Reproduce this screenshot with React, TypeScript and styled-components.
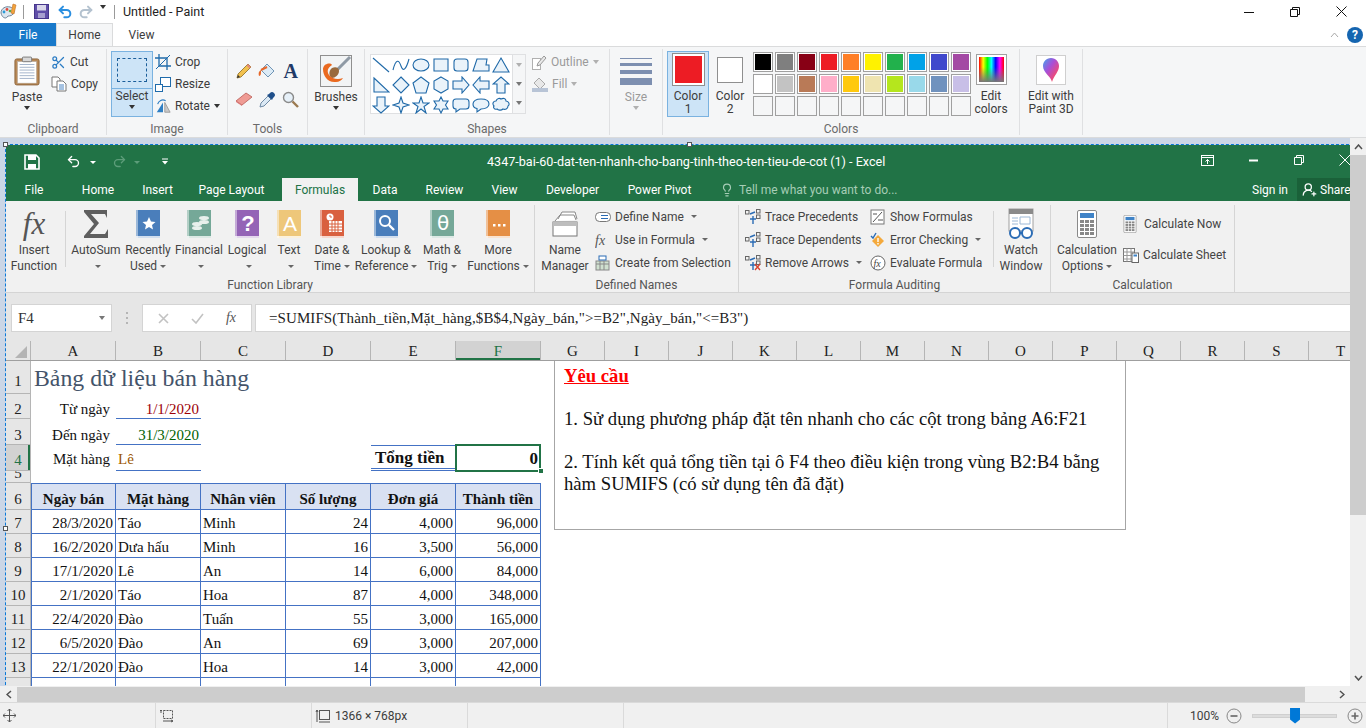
import React from "react";
import styled, { createGlobalStyle } from "styled-components";
import { Scissors, Undo2, Redo2, Lightbulb, UserRoundPlus } from "lucide-react";

const UI_FONT = `Roboto, "Liberation Sans", sans-serif`;
const SHEET_FONT = `"Liberation Serif", serif`;
const BLUE = "#4472c4";

const Global = createGlobalStyle`
  html, body { margin: 0; padding: 0; background: #fff; }
  * { box-sizing: border-box; }
  svg { display: block; flex: none; }
`;

const Window = styled.div`
  width: 1366px;
  height: 728px;
  overflow: hidden;
  display: flex;
  flex-direction: column;
  font-family: ${UI_FONT};
  font-size: 12px;
  color: #3c3c3c;
  background: #fff;
`;

/* ---------- paint chrome ---------- */

const PaintTitle = styled.div`
  height: 23px;
  display: flex;
  align-items: center;
  background: #fff;
`;
const QatSep = styled.div<{ $m: number }>`
  width: 1px;
  height: 14px;
  background: #9a9a9a;
  margin: 0 ${(p) => p.$m}px;
`;
const QatItem = styled.div<{ $ml: number }>`
  margin-left: ${(p) => p.$ml}px;
`;
const TitleText = styled.span`
  font-size: 12.5px;
  color: #222;
`;
const Controls = styled.div`
  margin-left: auto;
  display: flex;
  align-items: center;
  padding-right: 2px;
`;
const CtrlBtn = styled.div`
  width: 46px;
  height: 23px;
  display: flex;
  align-items: center;
  justify-content: center;
`;
const PaintTabs = styled.div`
  height: 23px;
  display: flex;
  align-items: stretch;
  background: #fff;
`;
const PaintFile = styled.div`
  width: 56px;
  background: #1979ca;
  color: #fff;
  display: flex;
  align-items: center;
  justify-content: center;
`;
const PaintTab = styled.div<{ $active?: boolean }>`
  width: 57px;
  display: flex;
  align-items: center;
  justify-content: center;
  color: #3c3c3c;
  background: ${(p) => (p.$active ? "#f5f6f7" : "transparent")};
  border: 1px solid ${(p) => (p.$active ? "#dadbdc" : "transparent")};
  border-bottom: none;
`;
const RibbonHelp = styled.div`
  margin-left: auto;
  display: flex;
  align-items: center;
  gap: 8px;
  padding-right: 3px;
`;
const HelpDot = styled.div`
  width: 16px;
  height: 16px;
  border-radius: 50%;
  background: #1565b0;
  color: #fff;
  font-weight: 700;
  font-size: 12px;
  display: flex;
  align-items: center;
  justify-content: center;
`;
const PaintRibbon = styled.div`
  height: 92px;
  background: #f5f6f7;
  border-top: 1px solid #dadbdc;
  border-bottom: 1px solid #dadbdc;
  display: flex;
`;
const PGroup = styled.div<{ $w: number }>`
  width: ${(p) => p.$w}px;
  margin-top: 2px;
  height: 86px;
  border-right: 1px solid #dfe0e2;
  display: flex;
  flex-direction: column;
`;
const PBody = styled.div<{ $pad?: number }>`
  height: 70px;
  display: flex;
  padding-left: ${(p) => p.$pad ?? 0}px;
`;
const PLabel = styled.div`
  height: 16px;
  text-align: center;
  color: #6a6a6a;
  line-height: 20px;
`;
const PBig = styled.div<{ $w: number; $ml?: number; $sel?: boolean; $dim?: boolean }>`
  width: ${(p) => p.$w}px;
  height: 66px;
  margin-left: ${(p) => p.$ml ?? 0}px;
  margin-top: 2px;
  display: flex;
  flex-direction: column;
  align-items: center;
  line-height: 15px;
  color: ${(p) => (p.$dim ? "#9a9a9a" : "#3c3c3c")};
  background: ${(p) => (p.$sel ? "#cde4f7" : "transparent")};
  border: 1px solid ${(p) => (p.$sel ? "#7ab2e0" : "transparent")};
`;
const PIconBox = styled.div`
  height: 38px;
  display: flex;
  align-items: center;
  justify-content: center;
  flex: none;
  align-self: stretch;
`;
const SelectTop = styled(PIconBox)`
  height: 37px;
  border-bottom: 1px solid #7ab2e0;
`;
const SelectMarquee = styled.div`
  width: 30px;
  height: 24px;
  border: 1px dashed #1b5e9a;
  background: #cde4f7;
`;
const PCaret = styled.span<{ $dim?: boolean; $light?: boolean }>`
  display: inline-block;
  width: 0;
  height: 0;
  border-left: 3.5px solid transparent;
  border-right: 3.5px solid transparent;
  border-top: 4px solid ${(p) => (p.$dim ? "#b0b0b0" : p.$light ? "#777" : "#333")};
  vertical-align: top;
`;
const CaretLine = styled.div`
  height: 8px;
  line-height: 0;
  padding-top: 1px;
  text-align: center;
`;
const PColumn = styled.div<{ $ml?: number }>`
  display: flex;
  flex-direction: column;
  margin-left: ${(p) => p.$ml ?? 0}px;
  margin-top: 2px;
`;
const PSmall = styled.div<{ $dim?: boolean }>`
  height: 22px;
  display: flex;
  align-items: center;
  gap: 4px;
  color: ${(p) => (p.$dim ? "#9a9a9a" : "#3c3c3c")};
`;
const ToolGrid = styled.div`
  display: grid;
  grid-template-columns: repeat(3, 23.5px);
  grid-auto-rows: 28px;
  align-items: center;
  justify-items: center;
  margin: 8px 0 0 4px;
`;
const ToolA = styled.span`
  font-family: ${SHEET_FONT};
  font-weight: 700;
  font-size: 20px;
  color: #1f3a68;
`;
const ShapesBox = styled.div`
  width: 156px;
  height: 60px;
  margin: 5px 0 0 5px;
  background: #fff;
  border: 1px solid #dfe0e2;
  display: flex;
`;
const ShapesGrid = styled.div`
  width: 141px;
  display: grid;
  grid-template-columns: repeat(7, 20px);
  grid-auto-rows: 20px;
  justify-items: center;
  align-items: center;
`;
const ShapesScroll = styled.div`
  flex: 1;
  border-left: 1px solid #dfe0e2;
  display: flex;
  flex-direction: column;
  align-items: center;
  justify-content: space-around;
  background: #f5f6f7;
`;
const SizeLines = styled.div`
  width: 32px;
  display: flex;
  flex-direction: column;
  gap: 4px;
`;
const SizeLine = styled.div<{ $h: number }>`
  height: ${(p) => p.$h}px;
  background: #7d8fb0;
`;
const ColorBtn = styled.div<{ $w: number; $sel?: boolean }>`
  width: ${(p) => p.$w}px;
  height: 66px;
  margin-top: 2px;
  display: flex;
  flex-direction: column;
  align-items: center;
  background: ${(p) => (p.$sel ? "#cde4f7" : "transparent")};
  border: 1px solid ${(p) => (p.$sel ? "#7ab2e0" : "transparent")};
  line-height: 13px;
`;
const ColorWell = styled.div<{ $size: number; $c: string; $mt: number; $mb: number }>`
  width: ${(p) => p.$size}px;
  height: ${(p) => p.$size}px;
  margin: ${(p) => p.$mt}px 0 ${(p) => p.$mb}px;
  background: ${(p) => p.$c};
  border: 2px solid #fff;
  outline: 1px solid #8f8f8f;
`;
const Palette = styled.div`
  display: grid;
  grid-template-columns: repeat(10, 20px);
  grid-auto-rows: 20px;
  gap: 2px;
  margin: 3px 0 0 2px;
`;
const Swatch = styled.div<{ $c?: string }>`
  border: 1px solid #a0a0a0;
  outline: 1px solid ${(p) => (p.$c ? "#fff" : "transparent")};
  outline-offset: -2px;
  background: ${(p) => p.$c ?? "#f5f6f7"};
`;
const Rainbow = styled.div`
  width: 29px;
  height: 29px;
  margin-bottom: 3px;
  border: 2px solid #fff;
  outline: 1px solid #a0a0a0;
  background: linear-gradient(to bottom, transparent 40%, #777 100%),
    linear-gradient(to right, #f00, #ff0, #0f0, #0ff, #00f, #f0f, #f00);
`;
const Paint3dBox = styled.div`
  width: 30px;
  height: 30px;
  margin-bottom: 3px;
  background: #fff;
  border: 1px solid #cfcfcf;
  display: flex;
  align-items: center;
  justify-content: center;
`;

/* ---------- canvas ---------- */

const CanvasArea = styled.div`
  flex: 1;
  min-height: 0;
  display: flex;
  flex-direction: column;
`;
const CanvasRow = styled.div`
  flex: 1;
  min-height: 0;
  display: flex;
`;
const CanvasView = styled.div`
  flex: 1;
  position: relative;
  background: #cbd6e6;
  padding: 7px 0 0 6px;
  overflow: hidden;
`;
const Handle = styled.div<{ $x: number; $y: number }>`
  position: absolute;
  left: ${(p) => p.$x}px;
  top: ${(p) => p.$y}px;
  width: 5px;
  height: 5px;
  background: #fff;
  border: 1px solid #555;
  z-index: 3;
`;
const Marquee = styled.div`
  position: absolute;
  left: 5px;
  top: 6px;
  right: -4px;
  bottom: -4px;
  border: 1px dashed #0a78d7;
  z-index: 2;
  pointer-events: none;
`;
const VScroll = styled.div`
  width: 16px;
  background: #f0f0f0;
  display: flex;
  flex-direction: column;
  align-items: center;
`;
const ScrollBtn = styled.div`
  height: 17px;
  flex: none;
  align-self: stretch;
  display: flex;
  align-items: center;
  justify-content: center;
`;
const ScrollBtnEnd = styled(ScrollBtn)`
  margin-top: auto;
`;
const VThumb = styled.div`
  height: 360px;
  align-self: stretch;
  background: #cdcdcd;
`;
const HScroll = styled.div`
  height: 16px;
  background: #f0f0f0;
  display: flex;
  align-items: center;
`;
const HBtn = styled.div`
  width: 17px;
  height: 16px;
  display: flex;
  align-items: center;
  justify-content: center;
`;
const HThumb = styled.div`
  width: 1288px;
  height: 15px;
  background: #cdcdcd;
`;
const HEndBtn = styled(HBtn)`
  margin-left: 28px;
`;

/* ---------- excel chrome ---------- */

const Excel = styled.div`
  width: 1344px;
  height: 541px;
  display: flex;
  flex-direction: column;
  background: #e6e6e6;
  overflow: hidden;
`;
const XlTitle = styled.div`
  height: 33px;
  background: #217346;
  color: #fff;
  display: flex;
  align-items: center;
  position: relative;
  overflow: hidden;
  flex: none;
`;
const XlQat = styled.div`
  width: 481px;
  display: flex;
  align-items: center;
  padding-left: 18px;
  flex: none;
`;
const MiniCaret = styled.span<{ $c?: string }>`
  display: inline-block;
  width: 0;
  height: 0;
  border-left: 3px solid transparent;
  border-right: 3px solid transparent;
  border-top: 3px solid ${(p) => p.$c ?? "#666"};
  vertical-align: middle;
  margin-left: 3px;
`;
const XlDocName = styled.div`
  font-size: 12.6px;
  white-space: nowrap;
`;
const XlCtrls = styled.div`
  position: absolute;
  right: -18px;
  top: 0;
  height: 30px;
  display: flex;
  align-items: center;
`;
const XlCtrl = styled.div`
  width: 46px;
  display: flex;
  justify-content: center;
`;
const XlTabs = styled.div`
  height: 23px;
  background: #217346;
  color: #fff;
  display: flex;
  align-items: stretch;
  flex: none;
`;
const XlTab = styled.div<{ $w: number; $active?: boolean }>`
  width: ${(p) => p.$w}px;
  display: flex;
  align-items: center;
  justify-content: center;
  background: ${(p) => (p.$active ? "#f1f1f1" : "transparent")};
  color: ${(p) => (p.$active ? "#217346" : "#fff")};
`;
const TellMe = styled.div`
  display: flex;
  align-items: center;
  gap: 5px;
  margin-left: 14px;
  color: #a6cdb6;
`;
const SignIn = styled.div`
  margin-left: auto;
  margin-right: 9px;
  display: flex;
  align-items: center;
`;
const ShareBox = styled.div`
  width: 53px;
  overflow: hidden;
  background: #1a6139;
  display: flex;
  align-items: center;
  gap: 3px;
  padding-left: 5px;
  white-space: nowrap;
`;
const XlRibbon = styled.div`
  height: 92px;
  background: #f1f1f1;
  border-bottom: 1px solid #d4d4d4;
  display: flex;
  flex: none;
  color: #444;
`;
const XGroup = styled.div<{ $w: number }>`
  width: ${(p) => p.$w}px;
  border-right: 1px solid #d5d5d5;
  margin-top: 4px;
  display: flex;
  flex-direction: column;
`;
const XBody = styled.div`
  height: 69px;
  display: flex;
`;
const XLabel = styled.div`
  height: 18px;
  text-align: center;
  line-height: 22px;
  color: #555;
`;
const XBig = styled.div<{ $w: number }>`
  width: ${(p) => p.$w}px;
  display: flex;
  flex-direction: column;
  align-items: center;
  line-height: 16px;
  white-space: nowrap;
  flex: none;
`;
const XIcon = styled.div`
  height: 37px;
  display: flex;
  align-items: center;
  justify-content: center;
  padding-top: 1px;
`;
const XSep = styled.div`
  width: 1px;
  height: 56px;
  margin: 6px 3px 0;
  background: #d5d5d5;
  flex: none;
`;
const XCol = styled.div<{ $ml?: number; $pt?: number; $gap?: number; $w?: number }>`
  display: flex;
  flex-direction: column;
  width: ${(p) => (p.$w ? `${p.$w}px` : "auto")};
  margin-left: ${(p) => p.$ml ?? 0}px;
  padding-top: ${(p) => p.$pt ?? 0}px;
  gap: ${(p) => p.$gap ?? 0}px;
  flex: none;
`;
const XSmall = styled.div`
  height: 23px;
  display: flex;
  align-items: center;
  gap: 4px;
  white-space: nowrap;
`;
const FxBig = styled.span`
  font-family: ${SHEET_FONT};
  font-style: italic;
  font-size: 31px;
  color: #555;
  line-height: 30px;
`;

/* ---------- formula bar ---------- */

const FormulaGap = styled.div`
  height: 11px;
  flex: none;
`;
const FormulaBar = styled.div`
  height: 28px;
  display: flex;
  flex: none;
  padding-left: 5px;
  font-family: ${SHEET_FONT};
  font-size: 15px;
`;
const NameBox = styled.div`
  width: 101px;
  background: #fff;
  border: 1px solid #d4d4d4;
  display: flex;
  align-items: center;
  justify-content: space-between;
  padding: 0 6px;
  color: #333;
`;
const DragDots = styled.div`
  width: 30px;
  display: flex;
  flex-direction: column;
  align-items: center;
  justify-content: center;
  gap: 3px;
`;
const Dot = styled.div`
  width: 2px;
  height: 2px;
  background: #b5b5b5;
`;
const FxButtons = styled.div`
  width: 110px;
  background: #fff;
  border: 1px solid #d4d4d4;
  display: flex;
  align-items: center;
  justify-content: space-around;
  padding: 0 4px;
`;
const FxGlyph = styled.span`
  font-style: italic;
  font-size: 14px;
  color: #555;
`;
const FormulaInput = styled.div`
  flex: 1;
  margin-left: 3px;
  background: #fff;
  border: 1px solid #d4d4d4;
  border-right: none;
  display: flex;
  align-items: center;
  padding-left: 13px;
  color: #222;
  letter-spacing: 0.09px;
  white-space: nowrap;
`;

/* ---------- sheet ---------- */

const ColStrip = styled.div`
  height: 20px;
  margin-top: 9px;
  display: flex;
  flex: none;
  border-bottom: 1px solid #9f9f9f;
  font-family: ${SHEET_FONT};
  font-size: 15px;
  color: #222;
  overflow: hidden;
`;
const Corner = styled.div`
  width: 25px;
  flex: none;
  display: flex;
  align-items: flex-end;
  justify-content: flex-end;
  padding: 0 3px 2px 0;
  border-right: 1px solid #b5b5b5;
`;
const CornerMark = styled.div`
  width: 0;
  height: 0;
  border-left: 12px solid transparent;
  border-bottom: 12px solid #b4b4b4;
`;
const ColHead = styled.div<{ $w: number; $sel?: boolean }>`
  width: ${(p) => p.$w}px;
  flex: none;
  display: flex;
  align-items: center;
  justify-content: center;
  padding-top: 2px;
  border-right: 1px solid #b5b5b5;
  background: ${(p) => (p.$sel ? "#d2d2d2" : "transparent")};
  color: ${(p) => (p.$sel ? "#217346" : "#222")};
  box-shadow: ${(p) => (p.$sel ? "inset 0 -2px 0 #217346" : "none")};
`;
const SheetBody = styled.div`
  flex: 1;
  min-height: 0;
  display: flex;
  background: #fff;
  position: relative;
  overflow: hidden;
  font-family: ${SHEET_FONT};
  font-size: 15px;
  line-height: 17px;
  color: #111;
`;
const RowHeads = styled.div`
  width: 25px;
  flex: none;
  background: #e6e6e6;
`;
const RowHead = styled.div<{ $h: number; $pb: number; $sel?: boolean }>`
  height: ${(p) => p.$h}px;
  display: flex;
  align-items: flex-end;
  justify-content: center;
  overflow: hidden;
  padding-bottom: ${(p) => p.$pb}px;
  border-bottom: 1px solid #b5b5b5;
  border-right: 1px solid #b5b5b5;
  color: ${(p) => (p.$sel ? "#217346" : "#222")};
  background: ${(p) => (p.$sel ? "#d2d2d2" : "transparent")};
  box-shadow: ${(p) => (p.$sel ? "inset -2px 0 0 #217346" : "none")};
`;
const Cells = styled.div`
  flex: 1;
`;
const GridRow = styled.div<{ $h: number }>`
  height: ${(p) => p.$h}px;
  display: grid;
  grid-template-columns: repeat(6, 85px) 1fr;
`;
const SheetTitle = styled.div`
  grid-column: 1 / span 4;
  font-size: 23.8px;
  line-height: 34px;
  color: #44546a;
  padding-left: 3px;
  white-space: nowrap;
`;
const FieldLabel = styled.div<{ $pb?: number }>`
  display: flex;
  align-items: flex-end;
  justify-content: flex-end;
  padding: 0 6px ${(p) => (p.$pb ?? 0) + 1}px 0;
`;
const FieldValue = styled.div<{ $c: string; $left?: boolean; $pb?: number }>`
  display: flex;
  align-items: flex-end;
  justify-content: ${(p) => (p.$left ? "flex-start" : "flex-end")};
  padding: 0 2px ${(p) => p.$pb ?? 0}px 2px;
  color: ${(p) => p.$c};
  border-bottom: 1px solid ${BLUE};
`;
const TotalLabel = styled.div`
  grid-column: 5;
  font-weight: 700;
  font-size: 17px;
  display: flex;
  align-items: center;
  justify-content: flex-start;
  padding: 1px 0 0 4px;
  border-top: 1px solid ${BLUE};
  border-bottom: 3px double ${BLUE};
`;
const TotalCell = styled.div`
  position: relative;
  font-weight: 700;
  font-size: 17px;
  display: flex;
  align-items: center;
  justify-content: flex-end;
  padding: 0 3px 0 0;
  margin: -1px 0 -1px -1px;
  outline: 2px solid #217346;
  outline-offset: -2px;
`;
const FillHandle = styled.div`
  position: absolute;
  right: -3px;
  bottom: -2px;
  width: 6px;
  height: 6px;
  background: #217346;
  border: 1px solid #fff;
`;
const HeadCell = styled.div<{ $first?: boolean }>`
  background: #d9e1f2;
  font-weight: 700;
  display: flex;
  align-items: flex-end;
  justify-content: center;
  padding-bottom: 1px;
  border: 1px solid ${BLUE};
  border-left: ${(p) => (p.$first ? `1px solid ${BLUE}` : "none")};
  white-space: nowrap;
`;
const DataCell = styled.div<{ $first?: boolean; $right?: boolean }>`
  display: flex;
  align-items: flex-end;
  justify-content: ${(p) => (p.$right ? "flex-end" : "flex-start")};
  padding: 0 2px 1px 2px;
  border-right: 1px solid ${BLUE};
  border-bottom: 1px solid ${BLUE};
  border-left: ${(p) => (p.$first ? `1px solid ${BLUE}` : "none")};
  white-space: nowrap;
`;
const NoteBox = styled.div`
  position: absolute;
  left: 548px;
  top: -1px;
  width: 572px;
  height: 170px;
  background: #fff;
  border: 1px solid #a6a6a6;
  padding: 4px 9px 0;
  font-size: 18.67px;
  line-height: 21.6px;
  color: #111;
`;
const NoteHead = styled.div`
  color: #f00;
  font-weight: 700;
  text-decoration: underline;
`;
const NoteLine = styled.div`
  margin-top: 21.6px;
`;

/* ---------- status bar ---------- */

const StatusBar = styled.div`
  height: 26px;
  flex: none;
  background: #f0f0f0;
  border-top: 1px solid #dadada;
  display: flex;
  align-items: center;
`;
const StatusCell = styled.div<{ $w: number }>`
  width: ${(p) => p.$w}px;
  height: 100%;
  flex: none;
  border-right: 1px solid #dadada;
  display: flex;
  align-items: center;
  gap: 4px;
  padding-left: 3px;
`;
const StatusZoom = styled.div`
  flex: 1;
  display: flex;
  align-items: center;
  padding-left: 22px;
`;
const ZoomBtn = styled.div`
  margin-left: 7px;
`;
const Slider = styled.div`
  width: 85px;
  height: 4px;
  margin: 0 3px 0 10px;
  background: #dcdcdc;
  border: 1px solid #cfcfcf;
  position: relative;
`;
const SliderThumb = styled.div`
  position: absolute;
  left: 37px;
  top: -7px;
  width: 10px;
  height: 16px;
  background: #0078d7;
  clip-path: polygon(0 0, 100% 0, 100% 75%, 50% 100%, 0 75%);
`;

/* ---------- drawings ---------- */

const sv = (w: number, h: number = w, vb?: string) => ({
  width: w,
  height: h,
  viewBox: vb ?? `0 0 ${w} ${h}`,
  fill: "none",
});

const PaintLogo = () => (
  <svg {...sv(17)}>
    <path d="M1 10C1 5 6 3 10 4s5 4 3 7-5 1-6 3-5 1-6-4Z" fill="#dce6ee" stroke="#6d8296" />
    <circle cx="4" cy="9" r="1.4" fill="#2b9bd8" />
    <circle cx="7" cy="6.5" r="1.4" fill="#e0483b" />
    <circle cx="10" cy="8" r="1.3" fill="#5bb04a" />
    <path d="M13 1l3 1-2 9-3-1Z" fill="#f2a33a" stroke="#c2702a" strokeWidth=".6" />
  </svg>
);
const PaintSave = () => (
  <svg {...sv(15)}>
    <rect x=".5" y=".5" width="14" height="14" fill="#5f4ea8" stroke="#46368c" />
    <rect x="3" y="1" width="9" height="5.5" fill="#d9d6ea" />
    <rect x="4" y="9" width="7" height="5" fill="#a79fd0" />
  </svg>
);
const Clipboard = () => (
  <svg {...sv(26, 30, "0 0 28 32")}>
    <rect x="1" y="3" width="26" height="28" rx="2" fill="#b98a58" stroke="#8a6238" />
    <rect x="4" y="6" width="20" height="23" fill="#fff" stroke="#bbb" strokeWidth=".5" />
    {[9, 12, 15, 18, 21, 24].map((y) => (
      <path key={y} d={`M6 ${y}H22`} stroke="#9fb0c8" />
    ))}
    <rect x="9" y="1" width="10" height="5" rx="1" fill="#d8d8d8" stroke="#777" />
  </svg>
);
const CopyIcon = () => (
  <svg {...sv(16)}>
    <path d="M1 1h6l2 2v8H1Z" fill="#fff" stroke="#777" />
    <path d="M6 5h6l3 3v7H6Z" fill="#fff" stroke="#777" />
    <path d="M8 9h5M8 11h5M8 13h5" stroke="#4d86c4" />
  </svg>
);
const CropIcon = () => (
  <svg {...sv(16)}>
    <path d="M4 0v12h12M0 4h12v12" stroke="#1f6bab" strokeWidth="1.3" />
    <path d="M1 15L15 1" stroke="#1f6bab" />
  </svg>
);
const ResizeIcon = () => (
  <svg {...sv(16)}>
    <rect x="5.5" y="1.5" width="10" height="9" fill="#fff" stroke="#1f6bab" />
    <rect x=".5" y="8.5" width="7" height="7" fill="#fff" stroke="#1f6bab" />
  </svg>
);
const RotateIcon = () => (
  <svg {...sv(16, 16, "0 0 18 18")}>
    <path d="M2 16L9 5v11Z" fill="#2f7fc4" />
    <path d="M11 16V5l6 11Z" fill="#c9c9c9" stroke="#999" />
    <path d="M3 7C4 3 8 1 12 3" stroke="#2f7fc4" strokeWidth="1.3" />
  </svg>
);
const PencilIcon = () => (
  <svg {...sv(16)}>
    <path d="M1 15l1-4L12 1l3 3L5 14Z" fill="#f2c14e" stroke="#8a6a20" strokeWidth=".8" />
    <path d="M12 1l3 3-1.5 1.5-3-3Z" fill="#e08a7a" />
    <path d="M1 15l1-3 2 2Z" fill="#333" />
  </svg>
);
const BucketIcon = () => (
  <svg {...sv(18)}>
    <path d="M9 2l7 7-6 6-7-7Z" fill="#dcebf6" stroke="#6f94b5" />
    <path d="M3 8C1 9 0 11 1 14c2 0 2-3 2-4Z" fill="#e8682a" />
    <path d="M3 8L9 5" stroke="#e8682a" strokeWidth="2" />
  </svg>
);
const EraserIcon = () => (
  <svg {...sv(18, 16)}>
    <path d="M1 10L11 2l6 4-10 8Z" fill="#ef9b94" stroke="#c56f69" />
    <path d="M1 10l6 4v1l-6-4Z" fill="#d77" />
  </svg>
);
const PickerIcon = () => (
  <svg {...sv(17)}>
    <path d="M1 16l1-4 7-7 3 3-7 7Z" fill="#dbe9f5" stroke="#6f8aa5" />
    <path d="M8 4l5 5 1-2 1-1a2.500 2.500 0 0 0-4-4l-1 1Z" fill="#1f4f8a" />
  </svg>
);
const LensIcon = () => (
  <svg {...sv(17)}>
    <circle cx="6.5" cy="6.5" r="5" fill="#e6f0f8" stroke="#8a8a8a" strokeWidth="1.4" />
    <path d="M10.500 10.500L16 16" stroke="#9b7a50" strokeWidth="2.4" />
  </svg>
);
const BrushesIcon = () => (
  <svg {...sv(32)}>
    <rect x=".5" y=".5" width="31" height="31" fill="#f2f4f5" stroke="#8f8f8f" />
    <path d="M30 2L17 15" stroke="#8f9aa5" strokeWidth="3" />
    <path d="M12 13c4-2 7 0 7 3 0 4-4 7-7 7-3-1-4-7 0-10Z" fill="#9a6a3c" />
    <path d="M3 14c0 7 5 14 13 13 3 0 6-2 7-4-5 2-11 1-14-3-2-3-2-7 3-10 0-1-3-2-5-1-2 0-4 3-4 5Z" fill="#ea6a20" />
  </svg>
);
const OutlineIcon = () => (
  <svg {...sv(15)}>
    <rect x=".5" y="3.500" width="8" height="11" stroke="#b0b0b0" fill="#fff" />
    <path d="M5 11l1-3 6-7 2 2-6 7Z" fill="#e8e8e8" stroke="#999" />
  </svg>
);
const FillIcon = () => (
  <svg {...sv(16)}>
    <path d="M7 2l6 6-5 5-6-6Z" fill="#e8e8e8" stroke="#aaa" />
    <rect x="0" y="12" width="16" height="4" fill="#b8c4d6" />
  </svg>
);
const Paint3d = () => (
  <svg {...sv(18, 26)}>
    <defs>
      <linearGradient id="p3d" x1="0" y1="0" x2="1" y2="1">
        <stop offset="0" stopColor="#3fa6ee" />
        <stop offset=".4" stopColor="#a84fd8" />
        <stop offset=".75" stopColor="#ee4a78" />
        <stop offset="1" stopColor="#f6b021" />
      </linearGradient>
    </defs>
    <path d="M9 1c5 0 8 4 8 8 0 6-5 9-7 16-1-6-9-9-9-16 0-4 3-8 8-8Z" fill="url(#p3d)" />
  </svg>
);

const SHAPE_PATHS = [
  "M1 2L17 16",
  "M1 14C4 2 7 4 9 10S14 14 17 3",
  "M1 9a8 6 0 1 0 16 0a8 6 0 1 0-16 0Z",
  "M2 3H16V15H2Z",
  "M5 3H13a3 3 0 0 1 3 3V12a3 3 0 0 1-3 3H5a3 3 0 0 1-3-3V6a3 3 0 0 1 3-3Z",
  "M5 3H15l-1 6h3v6H1Z",
  "M9 2L17 16H1Z",
  "M2 2L17 16H2Z",
  "M9 1L17 9L9 17L1 9Z",
  "M9 1L17 7L14 17H4L1 7Z",
  "M9 1L16 5V13L9 17L2 13V5Z",
  "M1 5H10V1L17 9L10 17V13H1Z",
  "M17 5H8V1L1 9L8 17V13H17Z",
  "M5 17V8H1L9 1L17 8H13V17Z",
  "M5 1V10H1L9 17L17 10H13V1Z",
  "M9 1L11 7L17 9L11 11L9 17L7 11L1 9L7 7Z",
  "M9 1L11 7H17L12 10.5L14 17L9 13L4 17L6 10.5L1 7H7Z",
  "M9 1L11 5H16L13.5 9L16 13H11L9 17L7 13H2L4.500 9L2 5H7Z",
  "M4 3H14a3 3 0 0 1 3 3V10a3 3 0 0 1-3 3H8L4 16V13a3 3 0 0 1-3-3V6a3 3 0 0 1 3-3Z",
  "M9 3c5 0 8 2 8 5s-3 5-8 5L5 16V12.500C2 12 1 10 1 8c0-3 3-5 8-5Z",
  "M4 5c1-3 4-3 5-2 2-1 5-1 5 2 3 0 4 4 2 5 0 3-3 4-5 3-2 2-5 1-6 0-3 1-4-2-3-3-2-2-1-5 2-5Z",
];
const ShapeGlyph = ({ d, open }: { d: string; open: boolean }) => (
  <svg {...sv(18)}>
    <path d={d} fill={open ? "none" : "#eaf3fa"} stroke="#1f69a8" strokeWidth="1.1" />
  </svg>
);

const Book = ({ c, children }: { c: string; children?: React.ReactNode }) => (
  <svg {...sv(24, 28)}>
    <rect x="0" y="0" width="24" height="28" fill={c} />
    <rect x="0" y="0" width="2" height="28" fill="#fff" opacity=".45" />
    <rect x="0" y="26" width="24" height="2" fill="#fff" opacity=".75" />
    {children}
  </svg>
);
const SmallSvg = ({ children }: { children: React.ReactNode }) => <svg {...sv(16)}>{children}</svg>;
const TraceIcon = ({ flip, x }: { flip?: boolean; x?: boolean }) => (
  <SmallSvg>
    <rect x=".5" y={flip ? 5.5 : 1.5} width="3.500" height="3.500" stroke="#666" />
    <rect x="11.500" y=".5" width="3.500" height="3.500" stroke="#666" />
    <rect x="11.500" y="6" width="3.500" height="3.500" stroke="#666" />
    <path d="M5 5L10 3M5 10h6M8 7v8" stroke="#2b6cb5" strokeWidth="1.4" />
    {x && <path d="M10 9l5 6M15 9l-5 6" stroke="#d8432e" strokeWidth="1.4" />}
  </SmallSvg>
);
const CalcIcon = ({ w, h }: { w: number; h: number }) => (
  <svg {...sv(w, h, "0 0 20 28")}>
    <rect x=".5" y=".5" width="19" height="27" rx="1.500" fill="#fff" stroke="#8a8a8a" />
    <rect x="3" y="3" width="14" height="5" fill="#3f83c7" />
    {[10, 14, 18, 22].map((y) =>
      [3, 8, 13].map((x) => <rect key={`${x}${y}`} x={x} y={y} width="4" height="3" fill="#888" />)
    )}
  </svg>
);
const MoreMenu = () => (
  <svg {...sv(8, 7)}>
    <path d="M1 1h6" stroke="#fff" />
    <path d="M1 3h6L4 6.500Z" fill="#fff" />
  </svg>
);

/* ---------- data ---------- */

const PALETTE: (string | undefined)[] = [
  "#000000", "#7f7f7f", "#880015", "#ed1c24", "#ff7f27", "#fff200", "#22b14c", "#00a2e8", "#3f48cc", "#a349a4",
  "#ffffff", "#c3c3c3", "#b97a57", "#ffaec9", "#ffc90e", "#efe4b0", "#b5e61d", "#99d9ea", "#7092be", "#c8bfe7",
  ...Array(10).fill(undefined),
];
const COLS = ["A", "B", "C", "D", "E", "F", "G", "I", "J", "K", "L", "M", "N", "O", "P", "Q", "R", "S", "T"];
const ROW_H: [string, number, number][] = [
  ["1", 33, 3], ["2", 25, 0], ["3", 26, 0], ["4", 26, 1], ["5", 12, 0], ["6", 27, 1], ["7", 24, 1], ["8", 24, 1],
  ["9", 24, 1], ["10", 24, 1], ["11", 24, 1], ["12", 24, 1], ["13", 24, 1], ["", 24, 1],
];
const HEADERS = ["Ngày bán", "Mặt hàng", "Nhân viên", "Số lượng", "Đơn giá", "Thành tiền"];
const ROWS: string[][] = [
  ["28/3/2020", "Táo", "Minh", "24", "4,000", "96,000"],
  ["16/2/2020", "Dưa hấu", "Minh", "16", "3,500", "56,000"],
  ["17/1/2020", "Lê", "An", "14", "6,000", "84,000"],
  ["2/1/2020", "Táo", "Hoa", "87", "4,000", "348,000"],
  ["22/4/2020", "Đào", "Tuấn", "55", "3,000", "165,000"],
  ["6/5/2020", "Đào", "An", "69", "3,000", "207,000"],
  ["22/1/2020", "Đào", "Hoa", "14", "3,000", "42,000"],
  ["", "", "", "", "", ""],
];
const XL_TABS: [string, number][] = [
  ["File", 56], ["Home", 72], ["Insert", 47], ["Page Layout", 101], ["Formulas", 76],
  ["Data", 54], ["Review", 65], ["View", 55], ["Developer", 81], ["Power Pivot", 93],
];

const FnButton = ({ w, icon, l1, l2 }: { w: number; icon: React.ReactNode; l1: string; l2?: string }) => (
  <XBig $w={w}>
    <XIcon>{icon}</XIcon>
    <div>{l1}</div>
    <div>
      {l2}
      <MiniCaret />
    </div>
  </XBig>
);

export default function App() {
  return (
    <Window>
      <Global />
      <PaintTitle>
        <PaintLogo />
        <QatSep $m={6} />
        <QatItem $ml={4}><PaintSave /></QatItem>
        <QatItem $ml={8}><Undo2 size={16} color="#2b8fe0" strokeWidth={3} /></QatItem>
        <QatItem $ml={5}><Redo2 size={16} color="#b4c2cf" strokeWidth={3} /></QatItem>
        <QatItem $ml={6}><PCaret /></QatItem>
        <QatSep $m={8} />
        <QatItem $ml={0}><TitleText>Untitled - Paint</TitleText></QatItem>
        <Controls>
          <CtrlBtn>
            <svg {...sv(10)}><path d="M0 5.500H10" stroke="#111" /></svg>
          </CtrlBtn>
          <CtrlBtn>
            <svg {...sv(10)}><path d="M.5 2.500h7v7h-7ZM2.500 2.500v-2h7v7h-2" stroke="#111" /></svg>
          </CtrlBtn>
          <CtrlBtn>
            <svg {...sv(11)}><path d="M.5 .5l10 10M10.500 .5l-10 10" stroke="#111" /></svg>
          </CtrlBtn>
        </Controls>
      </PaintTitle>

      <PaintTabs>
        <PaintFile>File</PaintFile>
        <PaintTab $active>Home</PaintTab>
        <PaintTab>View</PaintTab>
        <RibbonHelp>
          <svg {...sv(9, 6)}><path d="M1 5l3.500-4L8 5" stroke="#aaa" /></svg>
          <HelpDot>?</HelpDot>
        </RibbonHelp>
      </PaintTabs>

      <PaintRibbon>
        <PGroup $w={107}>
          <PBody>
            <PBig $w={42} $ml={6}>
              <PIconBox><Clipboard /></PIconBox>
              <div>Paste</div>
              <CaretLine><PCaret /></CaretLine>
            </PBig>
            <PColumn $ml={3}>
              <PSmall><Scissors size={15} color="#2b7cc4" />Cut</PSmall>
              <PSmall><CopyIcon />Copy</PSmall>
            </PColumn>
          </PBody>
          <PLabel>Clipboard</PLabel>
        </PGroup>
        <PGroup $w={121}>
          <PBody $pad={4}>
            <PBig $w={42} $sel>
              <SelectTop><SelectMarquee /></SelectTop>
              <div>Select</div>
              <CaretLine><PCaret /></CaretLine>
            </PBig>
            <PColumn $ml={2}>
              <PSmall><CropIcon />Crop</PSmall>
              <PSmall><ResizeIcon />Resize</PSmall>
              <PSmall><RotateIcon />Rotate <PCaret /></PSmall>
            </PColumn>
          </PBody>
          <PLabel>Image</PLabel>
        </PGroup>
        <PGroup $w={80}>
          <PBody>
            <ToolGrid>
              <PencilIcon />
              <BucketIcon />
              <ToolA>A</ToolA>
              <EraserIcon />
              <PickerIcon />
              <LensIcon />
            </ToolGrid>
          </PBody>
          <PLabel>Tools</PLabel>
        </PGroup>
        <PGroup $w={57}>
          <PBody>
            <PBig $w={56}>
              <PIconBox><BrushesIcon /></PIconBox>
              <div>Brushes</div>
              <CaretLine><PCaret /></CaretLine>
            </PBig>
          </PBody>
          <PLabel />
        </PGroup>
        <PGroup $w={245}>
          <PBody>
            <ShapesBox>
              <ShapesGrid>
                {SHAPE_PATHS.map((d, i) => (
                  <ShapeGlyph key={i} d={d} open={i < 2} />
                ))}
              </ShapesGrid>
              <ShapesScroll>
                <PCaret $dim />
                <PCaret $light />
                <PCaret $light />
              </ShapesScroll>
            </ShapesBox>
            <PColumn $ml={6}>
              <PSmall $dim><OutlineIcon />Outline <PCaret $dim /></PSmall>
              <PSmall $dim><FillIcon />Fill <PCaret $dim /></PSmall>
            </PColumn>
          </PBody>
          <PLabel>Shapes</PLabel>
        </PGroup>
        <PGroup $w={53}>
          <PBody>
            <PBig $w={52} $dim>
              <PIconBox>
                <SizeLines>
                  <SizeLine $h={1} />
                  <SizeLine $h={3} />
                  <SizeLine $h={4} />
                  <SizeLine $h={7} />
                </SizeLines>
              </PIconBox>
              <div>Size</div>
              <CaretLine><PCaret $dim /></CaretLine>
            </PBig>
          </PBody>
          <PLabel />
        </PGroup>
        <PGroup $w={357}>
          <PBody $pad={4}>
            <ColorBtn $w={42} $sel>
              <ColorWell $size={31} $c="#ed1c24" $mt={2} $mb={5} />
              <div>Color</div>
              <div>1</div>
            </ColorBtn>
            <ColorBtn $w={42}>
              <ColorWell $size={24} $c="#fff" $mt={6} $mb={8} />
              <div>Color</div>
              <div>2</div>
            </ColorBtn>
            <Palette>
              {PALETTE.map((c, i) => (
                <Swatch key={i} $c={c} />
              ))}
            </Palette>
            <ColorBtn $w={40}>
              <PIconBox><Rainbow /></PIconBox>
              <div>Edit</div>
              <div>colors</div>
            </ColorBtn>
          </PBody>
          <PLabel>Colors</PLabel>
        </PGroup>
        <PGroup $w={63}>
          <PBody>
            <ColorBtn $w={62}>
              <PIconBox><Paint3dBox><Paint3d /></Paint3dBox></PIconBox>
              <div>Edit with</div>
              <div>Paint 3D</div>
            </ColorBtn>
          </PBody>
          <PLabel />
        </PGroup>
      </PaintRibbon>

      <CanvasArea>
        <CanvasRow>
          <CanvasView>
            <Excel>
              <XlTitle>
                <XlQat>
                  <svg {...sv(16)}>
                    <path d="M1 1h11l3 3v11H1Z" stroke="#fff" strokeWidth="1.6" />
                    <rect x="4" y="1" width="8" height="5" fill="#fff" />
                    <rect x="4" y="10" width="8" height="5" fill="#fff" />
                  </svg>
                  <QatItem $ml={26}><Undo2 size={15} color="#fff" strokeWidth={2.2} /></QatItem>
                  <QatItem $ml={6}><MiniCaret $c="#fff" /></QatItem>
                  <QatItem $ml={16}><Redo2 size={15} color="#5d9d7a" strokeWidth={2.2} /></QatItem>
                  <QatItem $ml={4}><MiniCaret $c="#5d9d7a" /></QatItem>
                  <QatItem $ml={21}><MoreMenu /></QatItem>
                </XlQat>
                <XlDocName>4347-bai-60-dat-ten-nhanh-cho-bang-tinh-theo-ten-tieu-de-cot (1) - Excel</XlDocName>
                <XlCtrls>
                  <XlCtrl>
                    <svg {...sv(13, 11)}>
                      <rect x=".5" y=".5" width="12" height="10" stroke="#fff" />
                      <path d="M.5 2.500h12M6.500 9V4.500M4.500 6.500l2-2 2 2" stroke="#fff" />
                    </svg>
                  </XlCtrl>
                  <XlCtrl><svg {...sv(9, 3)}><path d="M0 1.500H9" stroke="#fff" strokeWidth="2" /></svg></XlCtrl>
                  <XlCtrl>
                    <svg {...sv(10)}><path d="M.5 2.500h7v7h-7ZM2.500 2.500v-2h7v7h-2" stroke="#fff" /></svg>
                  </XlCtrl>
                  <XlCtrl>
                    <svg {...sv(12)}><path d="M.5 .5l11 11M.5 11.500l11-11" stroke="#fff" /></svg>
                  </XlCtrl>
                </XlCtrls>
              </XlTitle>
              <XlTabs>
                {XL_TABS.map(([t, w]) => (
                  <XlTab key={t} $w={w} $active={t === "Formulas"}>{t}</XlTab>
                ))}
                <TellMe>
                  <Lightbulb size={14} color="#a6cdb6" />
                  Tell me what you want to do...
                </TellMe>
                <SignIn>Sign in</SignIn>
                <ShareBox>
                  <UserRoundPlus size={15} color="#fff" />
                  Share
                </ShareBox>
              </XlTabs>
              <XlRibbon>
                <XGroup $w={529}>
                  <XBody>
                    <XBig $w={56}>
                      <XIcon><FxBig>fx</FxBig></XIcon>
                      <div>Insert</div>
                      <div>Function</div>
                    </XBig>
                    <XSep />
                    <svg {...sv(1)} />
                    <FnButton w={52} l1="AutoSum" icon={
                      <svg {...sv(26, 28)}>
                        <path d="M1 0H24V8L22 4H8L16 13 7 24H22L25 19V28H1V26L11 14 1 2Z" fill="#5f5f5f" />
                      </svg>
                    } />
                    <FnButton w={52} l1="Recently" l2="Used" icon={
                      <Book c="#4a7ebb"><path d="M13 7l2 4.500 4.500.4-3.500 3 1 4.600-4-2.500-4 2.500 1-4.600-3.500-3 4.500-.4Z" fill="#fff" /></Book>
                    } />
                    <FnButton w={50} l1="Financial" icon={
                      <Book c="#75a898">
                        <ellipse cx="17" cy="8" rx="5" ry="2" fill="#e8f0ec" />
                        <ellipse cx="17" cy="12" rx="5" ry="2" fill="#e8f0ec" />
                        <ellipse cx="10" cy="14" rx="5" ry="2" fill="#e8f0ec" />
                        <ellipse cx="10" cy="18" rx="5" ry="2" fill="#e8f0ec" />
                      </Book>
                    } />
                    <FnButton w={46} l1="Logical" icon={
                      <Book c="#9464b6"><text x="13" y="21" fontSize="22" fontWeight="700" fill="#fff" fontFamily="Liberation Sans" textAnchor="middle">?</text></Book>
                    } />
                    <FnButton w={38} l1="Text" icon={
                      <Book c="#eec77a"><text x="13" y="21" fontSize="21" fill="#fff" fontFamily="Liberation Sans" textAnchor="middle">A</text></Book>
                    } />
                    <FnButton w={48} l1="Date &" l2="Time" icon={
                      <Book c="#d9603f">
                        <circle cx="10" cy="7" r="3.500" fill="#fff" />
                        <path d="M10 5v2h2" stroke="#d9603f" />
                        <rect x="9" y="11" width="13" height="11" fill="#fff" />
                        <path d="M9 14h13M9 17h13M9 20h13M12 11v11M15 11v11M18 11v11" stroke="#d9603f" />
                      </Book>
                    } />
                    <FnButton w={60} l1="Lookup &" l2="Reference" icon={
                      <Book c="#4a7ebb">
                        <circle cx="11" cy="11" r="5" stroke="#fff" strokeWidth="2" />
                        <path d="M15 15l5 5" stroke="#fff" strokeWidth="2.400" />
                      </Book>
                    } />
                    <FnButton w={52} l1="Math &" l2="Trig" icon={
                      <Book c="#75a898"><text x="13" y="20" fontSize="20" fill="#fff" fontFamily="DejaVu Sans" textAnchor="middle">θ</text></Book>
                    } />
                    <FnButton w={60} l1="More" l2="Functions" icon={
                      <Book c="#e58f45"><path d="M7 14h2.500v2.500H7ZM12 14h2.500v2.500H12ZM17 14h2.500v2.500H17Z" fill="#fff" /></Book>
                    } />
                  </XBody>
                  <XLabel>Function Library</XLabel>
                </XGroup>

                <XGroup $w={204}>
                  <XBody>
                    <XBig $w={60}>
                      <XIcon>
                        <svg {...sv(28, 30)}>
                          <path d="M4 12l5-6h14l2 5M7 10l4-7h13l2 7" stroke="#888" fill="#fff" />
                          <rect x="2" y="13" width="24" height="14" fill="#fff" stroke="#777" />
                          <rect x="2" y="13" width="24" height="4" fill="#bdbdbd" />
                        </svg>
                      </XIcon>
                      <div>Name</div>
                      <div>Manager</div>
                    </XBig>
                    <XCol>
                      <XSmall>
                        <SmallSvg>
                          <rect x=".5" y="3.500" width="15" height="9" rx="4" fill="#fff" stroke="#777" />
                          <path d="M6 6.500h7M6 9.500h7" stroke="#2b6cb5" />
                        </SmallSvg>
                        Define Name <MiniCaret />
                      </XSmall>
                      <XSmall>
                        <SmallSvg>
                          <text x="0" y="13" fontSize="14" fontStyle="italic" fill="#555" fontFamily="Liberation Serif">fx</text>
                        </SmallSvg>
                        Use in Formula<MiniCaret />
                      </XSmall>
                      <XSmall>
                        <SmallSvg>
                          <rect x="1" y="6" width="13" height="9" fill="#cfe0cf" stroke="#888" />
                          <path d="M1 9h13M5 6v9M9 6v9" stroke="#888" />
                          <rect x="4" y="1" width="7" height="4" fill="#fff" stroke="#2b6cb5" />
                        </SmallSvg>
                        Create from Selection
                      </XSmall>
                    </XCol>
                  </XBody>
                  <XLabel>Defined Names</XLabel>
                </XGroup>

                <XGroup $w={312}>
                  <XBody>
                    <XCol $ml={6} $w={117}>
                      <XSmall><TraceIcon />Trace Precedents</XSmall>
                      <XSmall><TraceIcon flip />Trace Dependents</XSmall>
                      <XSmall><TraceIcon x />Remove Arrows<MiniCaret /></XSmall>
                    </XCol>
                    <XCol $ml={8} $w={120}>
                      <XSmall>
                        <SmallSvg>
                          <rect x="1" y="1" width="13" height="14" fill="#fff" stroke="#777" />
                          <path d="M3 13L12 3M3 5h4M8 11h5" stroke="#555" />
                        </SmallSvg>
                        Show Formulas
                      </XSmall>
                      <XSmall>
                        <SmallSvg>
                          <path d="M8 3l6 6-6 6-6-6Z" fill="#f4a93c" />
                          <path d="M8 6v4M8 11v1.500" stroke="#fff" strokeWidth="1.400" />
                          <path d="M1 4l2 2 3-5" stroke="#2b6cb5" strokeWidth="1.400" />
                        </SmallSvg>
                        Error Checking <MiniCaret />
                      </XSmall>
                      <XSmall>
                        <SmallSvg>
                          <circle cx="8" cy="8" r="7" fill="#fff" stroke="#666" />
                          <text x="3.500" y="12" fontSize="10" fontStyle="italic" fill="#444" fontFamily="Liberation Serif">fx</text>
                        </SmallSvg>
                        Evaluate Formula
                      </XSmall>
                    </XCol>
                    <XSep />
                    <XBig $w={48}>
                      <XIcon>
                        <svg {...sv(28, 32)}>
                          <rect x="2" y="1" width="24" height="22" fill="#fff" stroke="#a0a0a0" />
                          <rect x="2" y="1" width="24" height="5" fill="#8a8a8a" />
                          <path d="M5 10h6M5 13h6M5 16h6M13 9h10v7H13Z" stroke="#9cb8d6" />
                          <circle cx="8" cy="25" r="5" fill="#fff" stroke="#2b6cb5" strokeWidth="2" />
                          <circle cx="20" cy="25" r="5" fill="#fff" stroke="#2b6cb5" strokeWidth="2" />
                          <path d="M13 25h2" stroke="#2b6cb5" strokeWidth="2" />
                        </svg>
                      </XIcon>
                      <div>Watch</div>
                      <div>Window</div>
                    </XBig>
                  </XBody>
                  <XLabel>Formula Auditing</XLabel>
                </XGroup>

                <XGroup $w={184}>
                  <XBody>
                    <XBig $w={72}>
                      <XIcon><CalcIcon w={20} h={28} /></XIcon>
                      <div>Calculation</div>
                      <div>Options<MiniCaret /></div>
                    </XBig>
                    <XCol $pt={7} $gap={8}>
                      <XSmall><CalcIcon w={14} h={18} />&nbsp;Calculate Now</XSmall>
                      <XSmall>
                        <SmallSvg>
                          <rect x=".5" y="1.500" width="11" height="13" fill="#fff" stroke="#777" />
                          <path d="M.5 5h11M.5 8.500h11M.5 12h11M4 1.500v13M8 1.500v13" stroke="#999" />
                          <rect x="9" y="6" width="6.500" height="9.500" fill="#fff" stroke="#666" />
                          <rect x="10.500" y="7.500" width="3.500" height="2" fill="#3f83c7" />
                        </SmallSvg>
                        Calculate Sheet
                      </XSmall>
                    </XCol>
                  </XBody>
                  <XLabel>Calculation</XLabel>
                </XGroup>
              </XlRibbon>

              <FormulaGap />
              <FormulaBar>
                <NameBox>
                  F4
                  <PCaret $light />
                </NameBox>
                <DragDots><Dot /><Dot /><Dot /></DragDots>
                <FxButtons>
                  <svg {...sv(11)}><path d="M1 1l9 9M10 1l-9 9" stroke="#c2c2c2" strokeWidth="1.600" /></svg>
                  <svg {...sv(13, 11)}><path d="M1 6l4 4 7-9" stroke="#c2c2c2" strokeWidth="1.600" /></svg>
                  <FxGlyph>fx</FxGlyph>
                </FxButtons>
                <FormulaInput>=SUMIFS(Thành_tiền,Mặt_hàng,$B$4,Ngày_bán,"&gt;=B2",Ngày_bán,"&lt;=B3")</FormulaInput>
              </FormulaBar>

              <ColStrip>
                <Corner><CornerMark /></Corner>
                {COLS.map((c, i) => (
                  <ColHead key={c} $w={i < 6 ? 85 : 64} $sel={c === "F"}>{c}</ColHead>
                ))}
              </ColStrip>

              <SheetBody>
                <RowHeads>
                  {ROW_H.map(([n, h, pb], i) => (
                    <RowHead key={i} $h={h} $pb={pb} $sel={n === "4"}>{n}</RowHead>
                  ))}
                </RowHeads>
                <Cells>
                  <GridRow $h={33}><SheetTitle>Bảng dữ liệu bán hàng</SheetTitle></GridRow>
                  <GridRow $h={25}>
                    <FieldLabel>Từ ngày</FieldLabel>
                    <FieldValue $c="#9c0006">1/1/2020</FieldValue>
                  </GridRow>
                  <GridRow $h={26}>
                    <FieldLabel>Đến ngày</FieldLabel>
                    <FieldValue $c="#006100">31/3/2020</FieldValue>
                  </GridRow>
                  <GridRow $h={26}>
                    <FieldLabel $pb={2}>Mặt hàng</FieldLabel>
                    <FieldValue $c="#9c5700" $left $pb={2}>Lê</FieldValue>
                    <TotalLabel>Tổng tiền</TotalLabel>
                    <TotalCell>0<FillHandle /></TotalCell>
                  </GridRow>
                  <GridRow $h={12} />
                  <GridRow $h={27}>
                    {HEADERS.map((h, i) => (
                      <HeadCell key={h} $first={i === 0}>{h}</HeadCell>
                    ))}
                  </GridRow>
                  {ROWS.map((r, i) => (
                    <GridRow key={i} $h={24}>
                      {r.map((v, j) => (
                        <DataCell key={j} $first={j === 0} $right={j === 0 || j > 2}>{v}</DataCell>
                      ))}
                    </GridRow>
                  ))}
                </Cells>
                <NoteBox>
                  <NoteHead>Yêu cầu</NoteHead>
                  <NoteLine>1. Sử dụng phương pháp đặt tên nhanh cho các cột trong bảng A6:F21</NoteLine>
                  <NoteLine>2. Tính kết quả tổng tiền tại ô F4 theo điều kiện trong vùng B2:B4 bằng hàm SUMIFS (có sử dụng tên đã đặt)</NoteLine>
                </NoteBox>
              </SheetBody>
            </Excel>
            <Marquee />
            <Handle $x={3} $y={4} />
            <Handle $x={687} $y={4} />
            <Handle $x={3} $y={388} />
          </CanvasView>
          <VScroll>
            <ScrollBtn>
              <svg {...sv(9, 6)}><path d="M1 5l3.500-4L8 5" stroke="#505050" strokeWidth="1.500" /></svg>
            </ScrollBtn>
            <VThumb />
            <ScrollBtnEnd>
              <svg {...sv(9, 6)}><path d="M1 1l3.500 4L8 1" stroke="#505050" strokeWidth="1.500" /></svg>
            </ScrollBtnEnd>
          </VScroll>
        </CanvasRow>
        <HScroll>
          <HBtn><svg {...sv(6, 9)}><path d="M5 1L1 4.500 5 8" stroke="#505050" strokeWidth="1.500" /></svg></HBtn>
          <HThumb />
          <HEndBtn><svg {...sv(6, 9)}><path d="M1 1l4 3.500L1 8" stroke="#505050" strokeWidth="1.500" /></svg></HEndBtn>
        </HScroll>
      </CanvasArea>

      <StatusBar>
        <StatusCell $w={156}>
          <svg {...sv(13)}>
            <path d="M6.500 0v13M0 6.500h13M4.500 2l2-2 2 2M4.500 11l2 2 2-2M2 4.500l-2 2 2 2M11 4.500l2 2-2 2" stroke="#555" />
          </svg>
        </StatusCell>
        <StatusCell $w={156}>
          <svg {...sv(16, 14)}>
            <path d="M2 1v3M1 2l1-1 1 1" stroke="#555" />
            <rect x="4.500" y="1.500" width="9" height="8" stroke="#555" strokeDasharray="2 1" />
            <path d="M4 12h10M12 11l2 1-2 1" stroke="#555" />
          </svg>
        </StatusCell>
        <StatusCell $w={156}>
          <svg {...sv(16, 14)}>
            <path d="M2 1v12M1 3l1-2 1 2" stroke="#555" />
            <rect x="4.500" y="1.500" width="10" height="9" stroke="#555" />
            <path d="M4 13h11" stroke="#555" />
          </svg>
          1366 × 768px
        </StatusCell>
        <StatusCell $w={156} />
        <StatusCell $w={544} />
        <StatusZoom>
          100%
          <ZoomBtn>
            <svg {...sv(16)}>
              <circle cx="8" cy="8" r="7" stroke="#888" />
              <path d="M4.500 8h7" stroke="#666" strokeWidth="1.600" />
            </svg>
          </ZoomBtn>
          <Slider><SliderThumb /></Slider>
          <ZoomBtn>
            <svg {...sv(16)}>
              <circle cx="8" cy="8" r="7" stroke="#888" />
              <path d="M4.500 8h7M8 4.500v7" stroke="#666" strokeWidth="1.600" />
            </svg>
          </ZoomBtn>
        </StatusZoom>
      </StatusBar>
    </Window>
  );
}
